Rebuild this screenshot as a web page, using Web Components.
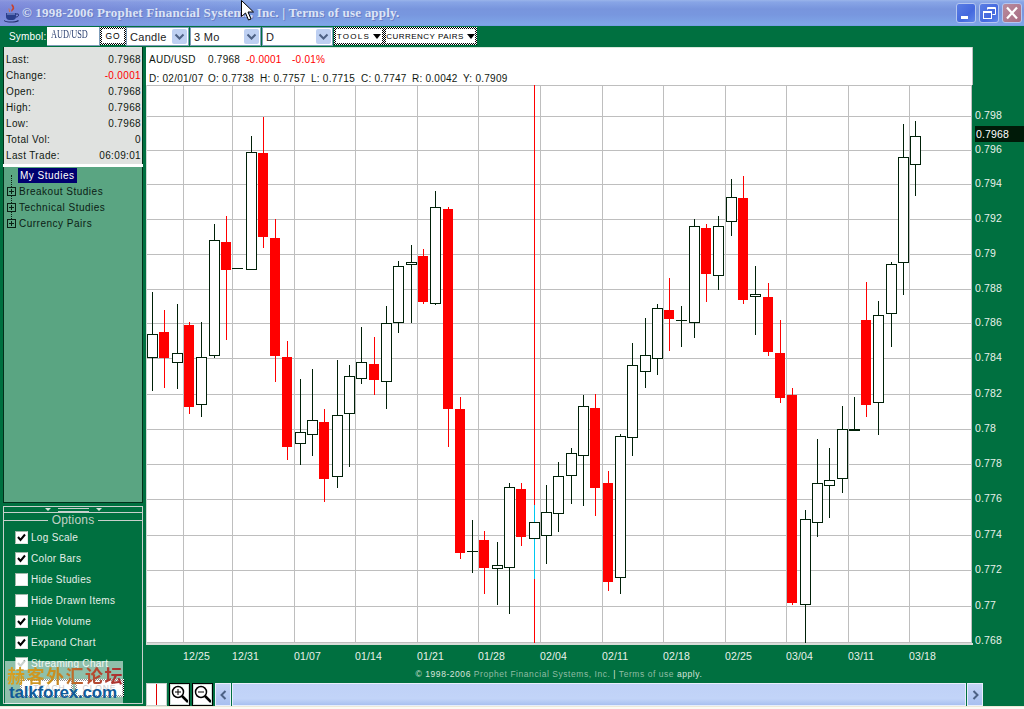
<!DOCTYPE html>
<html>
<head>
<meta charset="utf-8">
<title>Prophet Chart</title>
<style>
  html, body { margin: 0; padding: 0; width: 1024px; height: 709px; overflow: hidden; background: #007040; }
  body { font-family: "Liberation Sans", Arial, sans-serif; font-size: 10px; }
</style>
</head>
<body>
<x-app>
  <x-titlebar slot="top">© 1998-2006 Prophet Financial Systems, Inc. | Terms of use apply.</x-titlebar>
  <x-toolbar slot="top"></x-toolbar>
  <x-side slot="side">
    <x-quote></x-quote>
    <x-tree></x-tree>
    <x-options></x-options>
  </x-side>
  <x-chart slot="center"></x-chart>
  <x-bottom-bar slot="center"></x-bottom-bar>
</x-app>

<script>
class App extends HTMLElement {
  connectedCallback() {
    this.attachShadow({mode: 'open'}).innerHTML = `
    <style>
      :host { display: flex; flex-direction: column; width: 1024px; height: 709px; background: #007040; }
      .main { display: flex; height: 659px; }
      .side { display: block; width: 146px; flex: none; }
      .center { display: flex; flex-direction: column; flex: 1; min-width: 0; }
      .strip { height: 3px; background: linear-gradient(#ece9d8 0 1px, #fbfaf4 1px); }
    </style>
    <slot name="top"></slot>
    <div class="main">
      <div class="side"><slot name="side"></slot></div>
      <div class="center"><slot name="center"></slot></div>
    </div>
    <div class="strip"></div>`;
  }
}

class Titlebar extends HTMLElement {
  connectedCallback() {
    this.attachShadow({mode: 'open'}).innerHTML = `
    <style>
      :host {
        display: flex; align-items: center; position: relative; height: 26px; box-sizing: border-box; padding: 0 2px 0 3px;
        background:
          linear-gradient(90deg, rgba(125,110,205,.38), rgba(125,110,205,0) 24%),
          linear-gradient(#9ab4ea 0, #88a5e6 2px, #7895dd 9px, #7897df 15px, #7fa6e8 25px, #6f97e0 26px);
      }
      .icon { width: 17px; height: 20px; flex: none; margin-right: 2px; }
      .text {
        flex: 1; color: #dce4f6; font: bold 13px/1 "Liberation Serif", serif; letter-spacing: .2px;
        text-shadow: 1px 1px 0 #6b7cc4; white-space: nowrap; margin-top: -1px;
      }
      .btn {
        width: 20px; height: 20px; flex: none; margin-left: 3px; border: 1px solid #b4c6f0; border-radius: 3px; box-sizing: border-box;
        background: linear-gradient(135deg, #5a7ee4, #4468de 60%, #5f86ea);
        display: flex; align-items: center; justify-content: center;
      }
      .btn.close { background: linear-gradient(135deg, #b88c9e, #a86c82); margin-right: 0; }
      .btn svg { width: 18px; height: 18px; }
      .cursor { position: absolute; left: 241px; top: 0; width: 13px; height: 21px; }
    </style>
    <svg class="icon" viewBox="0 0 17 20">
      <path d="M9 1c-2 2 2 3 0 5-1 1-1 2 0 3 0-2 3-2 2-5 0-1-1-2-2-3z" fill="#c8402c"/>
      <path d="M6 5c-1 1 0 2 0 3 0 1 0 1 1 1 0-2-.5-3-1-4z" fill="#d8703c"/>
      <path d="M3 10h10v4c0 2-2 3-3 3H6c-1 0-3-1-3-3z" fill="#2a3f8c"/>
      <path d="M13 11h2c1 0 1 3-2 3" fill="none" stroke="#1c2a6c"/>
      <path d="M1 17c2 2 11 2 14 0l1 1c-3 2-12 2-15 0z" fill="#24306e"/>
      <path d="M4 11h8" stroke="#8ea4e4"/>
    </svg>
    <div class="text"><slot></slot></div>
    <div class="btn"><svg viewBox="0 0 18 18"><rect x="4" y="12" width="7" height="3" fill="#fff"/></svg></div>
    <div class="btn"><svg viewBox="0 0 18 18" fill="none" stroke="#fff"><path d="M7.500 5.500v-2h8v7h-3"/><path d="M7.500 4.500h8"/><rect x="3.500" y="7.500" width="8" height="7"/><path d="M3.500 8.500h8"/></svg></div>
    <div class="btn close"><svg viewBox="0 0 18 18" fill="none" stroke="#fff" stroke-width="2.200"><path d="M4 3.500l10 11M14 3.500l-10 11"/></svg></div>
    <svg class="cursor" viewBox="0 0 13 21"><path d="M.5.500v16l4-3.500 3 7 2.500-1-3-7h5.500z" fill="#fff" stroke="#000"/></svg>`;
  }
}

class DottedButton extends HTMLElement {
  connectedCallback() {
    this.attachShadow({mode: 'open'}).innerHTML = `
    <style>
      :host {
        display: flex; box-sizing: border-box; padding: 2px; height: 18px;
        background: conic-gradient(#000 25%, #fff 0 50%, #000 0 75%, #fff 0) 0 0 / 2px 2px;
      }
      div {
        flex: 1; background: #fff; display: flex; align-items: center; justify-content: center; gap: 3px;
        font-size: var(--btn-font, 8.500px); letter-spacing: var(--btn-spacing, .9px); color: var(--btn-color, #000); white-space: nowrap;
      }
      i { border: 4px solid transparent; border-top: 5px solid #000; border-bottom: 0; }
    </style>
    <div><slot></slot>${this.hasAttribute('menu') ? '<i></i>' : ''}</div>`;
  }
}

class Combo extends HTMLElement {
  connectedCallback() {
    this.attachShadow({mode: 'open'}).innerHTML = `
    <style>
      :host {
        display: flex; box-sizing: border-box; height: 19px; border: 1px solid #7f9db9; background: #fff; align-items: center;
        font-size: 11px; letter-spacing: .3px; color: #222; padding-left: 3px;
      }
      span { flex: 1; }
      svg { width: 15px; height: 15px; margin-right: 1px; flex: none; }
    </style>
    <span><slot></slot></span>
    <svg viewBox="0 0 15 15">
      <rect width="15" height="15" rx="2" fill="#bed0f2"/>
      <path d="M3.500 5.500l4 4 4-4" fill="none" stroke="#4d6185" stroke-width="2"/>
    </svg>`;
  }
}

class Toolbar extends HTMLElement {
  connectedCallback() {
    this.attachShadow({mode: 'open'}).innerHTML = `
    <style>
      :host { display: flex; height: 21px; box-sizing: border-box; padding-top: 1px; background: #007040; }
      .label { width: 38px; margin-left: 9px; color: #fff; font-size: 10px; letter-spacing: .2px; line-height: 20px; white-space: nowrap; }
      .sym {
        width: 53px; height: 19px; box-sizing: border-box; background: #fff; border: solid #7f9db9; border-width: 0 1px 1px 0;
        font: 11.500px/14px "Liberation Serif", serif; color: #2a3f70; padding-left: 4px;
      }
      .sym span { display: inline-block; transform: scaleX(.72); transform-origin: left; }
      x-dotted-button, x-combo { flex: none; }
    </style>
    <div class="label">Symbol:</div>
    <div class="sym"><span>AUD/USD</span></div>
    <x-dotted-button style="width:26px">GO</x-dotted-button>
    <x-combo style="width:63px">Candle</x-combo>
    <x-combo style="width:71px;margin-left:1px">3 Mo</x-combo>
    <x-combo style="width:71px;margin-left:1px">D</x-combo>
    <x-dotted-button menu style="width:50px;margin-left:1px;--btn-font:8px;--btn-spacing:1.300px">TOOLS</x-dotted-button>
    <x-dotted-button menu style="width:93px;--btn-font:8px;--btn-spacing:.47px">CURRENCY PAIRS</x-dotted-button>`;
  }
}

class Side extends HTMLElement {
  connectedCallback() {
    this.attachShadow({mode: 'open'}).innerHTML = `
    <style>
      :host { display: flex; flex-direction: column; height: 657px; box-sizing: border-box; padding-left: 3px; width: 143px; }
    </style>
    <slot></slot>`;
  }
}

class Quote extends HTMLElement {
  connectedCallback() {
    const rows = [
      ['Last:', '0.7968'], ['Change:', '-0.0001', 1], ['Open:', '0.7968'], ['High:', '0.7968'],
      ['Low:', '0.7968'], ['Total Vol:', '0'], ['Last Trade:', '06:09:01']
    ];
    this.attachShadow({mode: 'open'}).innerHTML = `
    <style>
      :host {
        display: block; height: 117px; box-sizing: border-box; background: #e0e2e0; border: 1px solid #02301a;
        border-width: 0 1px 0 1px; padding: 5px 1px 0 2px; color: #101810; font-size: 10px; letter-spacing: .35px;
      }
      .row { display: flex; justify-content: space-between; height: 16px; line-height: 16px; }
      .neg { color: #f00; }
    </style>
    ${rows.map(r => `<div class="row"><span>${r[0]}</span><span class="${r[2] ? 'neg' : ''}">${r[1]}</span></div>`).join('')}`;
  }
}

class Tree extends HTMLElement {
  connectedCallback() {
    const plus = `<svg width="9" height="9" viewBox="0 0 9 9"><rect x=".5" y=".5" width="8" height="8" fill="none" stroke="#0a2014"/><path d="M2 4.500h5M4.500 2v5" stroke="#0a2014"/></svg>`;
    this.attachShadow({mode: 'open'}).innerHTML = `
    <style>
      :host {
        display: block; position: relative; height: 336px; margin-top: 3px; box-sizing: border-box; background: #5aa582;
        border: 1px solid #02301a; border-width: 0 1px 1px 1px; padding-top: 1px; font-size: 10px; letter-spacing: .5px; color: #0a2014;
        box-shadow: 0 -3px 0 #fff;
      }
      .row { display: flex; align-items: center; height: 16px; padding-left: 3px; gap: 3px; position: relative; }
      .row.first { height: 15px; }
      .gap { width: 9px; }
      .sel { background: #000070; color: #fff; padding: 0 3px 0 2px; line-height: 15px; margin-left: -1px; }
      .dots { position: absolute; left: 7px; top: 8px; height: 50px; border-left: 1px dotted #0a2014; }
      svg { position: relative; background: #5aa582; flex: none; }
    </style>
    <div class="dots"></div>
    <div class="row first"><span class="gap"></span><span class="sel">My Studies</span></div>
    <div class="row">${plus}<span>Breakout Studies</span></div>
    <div class="row">${plus}<span>Technical Studies</span></div>
    <div class="row">${plus}<span>Currency Pairs</span></div>`;
  }
}

class Check extends HTMLElement {
  connectedCallback() {
    const on = this.hasAttribute('checked');
    const color = this.hasAttribute('faded') ? '#8a9a90' : '#000';
    this.attachShadow({mode: 'open'}).innerHTML = `
    <style>
      :host { display: flex; align-items: center; height: 21px; gap: 3px; color: #e4eee8; font-size: 10px; letter-spacing: .3px; }
      .box {
        width: 13px; height: 13px; box-sizing: border-box; background: #fff; flex: none;
        border: 1px solid; border-color: #9db8a8 #e4e8e4 #e4e8e4 #9db8a8;
      }
      svg { display: block; }
    </style>
    <div class="box">${on ? `<svg width="11" height="11" viewBox="0 0 11 11"><path d="M2 5l2.500 3L9 2.500" fill="none" stroke="${color}" stroke-width="2"/></svg>` : ''}</div>
    <span><slot></slot></span>`;
  }
}

class Options extends HTMLElement {
  connectedCallback() {
    this.attachShadow({mode: 'open'}).innerHTML = `
    <style>
      :host { display: block; position: relative; margin-top: 3px; height: 198px; box-sizing: border-box; color: #d8e4dc; }
      .split {
        height: 7px; box-sizing: border-box; border: solid #c8d0cc; border-width: 1px; display: flex; align-items: center; justify-content: center; gap: 7px;
      }
      .split i { border: 3px solid transparent; border-top: 3px solid #d8e4dc; border-bottom: 0; }
      .split b { width: 31px; height: 2px; border: solid #c8d0cc; border-width: 1px 0; }
      .frame { height: 191px; box-sizing: border-box; border: solid #c8d0cc; border-width: 0 1px 1px 1px; padding: 0 0 0 11px; position: relative; }
      .legend {
        display: flex; align-items: center; gap: 4px; height: 14px; margin: 0 0 0 -11px; font-size: 12px; letter-spacing: .2px; color: #c0d0c6;
      }
      .legend::before, .legend::after { content: ""; flex: 1; border-top: 1px solid #c8d0cc; }
      .btns { display: flex; gap: 2px; margin: 5px 0 0 5px; --btn-color: #888; }
      .mark {
        position: absolute; left: 1px; top: 148px; width: 118px; height: 43px; background: rgba(255,255,255,.56); overflow: hidden;
      }
      .cn {
        display: block; font: bold 18px/19px "Noto Sans CJK SC", sans-serif; letter-spacing: 1.500px; white-space: nowrap; margin: 5px 0 0 2px;
        background: linear-gradient(90deg, #d8a020, #c89020 40%, #b85030 70%, #a82c30); -webkit-background-clip: text; background-clip: text; color: transparent;
      }
      .en {
        display: block; font: bold 17px/20px "Liberation Sans", sans-serif; letter-spacing: -.2px; color: #0f5a98; margin: -2px 0 0 4px; white-space: nowrap;
      }
    </style>
    <div class="split"><i></i><b></b><i></i></div>
    <div class="frame">
      <div class="legend">Options</div>
      <x-check checked>Log Scale</x-check>
      <x-check checked>Color Bars</x-check>
      <x-check>Hide Studies</x-check>
      <x-check>Hide Drawn Items</x-check>
      <x-check checked>Hide Volume</x-check>
      <x-check checked>Expand Chart</x-check>
      <x-check checked faded>Streaming Chart</x-check>
      <div class="btns">
        <x-dotted-button style="width:53px">ATTACH</x-dotted-button>
        <x-dotted-button style="width:49px">CLONE</x-dotted-button>
      </div>
      <div class="mark"><span class="cn">赫客外汇论坛</span><span class="en">talkforex.com</span></div>
    </div>`;
  }
}

// x, wick top, wick bottom, body top, body bottom (screen pixels of the reference)
const CANDLES = `w 152 292 391 334 357|r 164 310 388 332 358|w 177 304 389 353 362|r 189 322 414 325 407|w 201 322 417 357 404
w 214 224 358 240 355|r 226 216 340 242 270|d 237 268 268 268 268|w 251 136 269 152 269|r 263 117 248 153 237
r 275 219 382 238 356|r 287 341 460 357 447|w 300 379 465 432 443|w 312 369 456 420 434|r 324 409 502 422 479
w 337 360 488 415 476|w 349 365 467 376 413|w 361 327 384 362 378|r 374 337 395 364 380|w 386 306 409 323 381
w 398 261 333 266 322|w 411 245 323 262 264|r 423 249 304 256 302|w 435 191 305 207 303|r 448 207 447 209 409
r 460 397 559 409 553|d 472 520 573 551 551|r 484 531 594 540 568|w 497 542 605 565 568|w 509 483 614 487 567
r 521 483 546 489 537|c 534 505 579 522 538|w 546 485 564 512 535|w 558 462 532 476 513|w 571 448 504 453 475
w 583 395 506 406 455|r 595 394 516 408 488|r 608 471 591 483 582|w 620 434 594 436 577|w 632 343 456 365 437
w 645 318 388 355 371|w 657 304 375 308 358|r 669 278 351 310 319|d 681 306 347 320 320|w 694 219 338 226 322
r 706 224 302 228 274|w 718 216 290 226 275|w 731 179 236 197 221|r 743 176 304 198 300|w 755 266 335 294 296
r 768 283 356 297 352|r 780 320 403 353 398|r 792 388 605 395 603|w 805 510 643 519 604|w 817 439 537 483 522
w 829 448 518 480 485|w 842 406 493 429 478|t 854 397 430 429 429|r 866 282 417 320 405|w 878 301 435 315 402
w 891 262 347 264 313|w 903 124 295 157 262|w 915 121 196 136 164`.split(/[|\n]/).map(s => s.trim().split(' '));

const GRID_Y = [85, 116, 150, 184, 219, 254, 289, 323, 358, 394, 429, 464, 499, 535, 570, 606, 642];
const GRID_X = [183, 232, 294, 355, 417, 478, 540, 602, 663, 725, 786, 848, 909];
const Y_LABELS = ['0.798', '0.796', '0.794', '0.792', '0.79', '0.788', '0.786', '0.784', '0.782', '0.78', '0.778', '0.776', '0.774', '0.772', '0.77', '0.768'];
const X_LABELS = ['12/25', '12/31', '01/07', '01/14', '01/21', '01/28', '02/04', '02/11', '02/18', '02/25', '03/04', '03/11', '03/18'];
const DARK = '#002008';
const RED = '#ff0000';

function candleSvg(row) {
  const type = row[0];
  const [x, top, bottom, bodyTop, bodyBottom] = row.slice(1).map(Number);
  const color = type === 'r' ? RED : DARK;
  const wick = type === 'c' ? '#00c8f0' : color;
  let out = top !== bottom ? `<rect x="${x}" y="${top}" width="1" height="${bottom - top}" fill="${wick}"/>` : '';
  if (type === 'r') {
    out += `<rect x="${x - 5}" y="${bodyTop}" width="10" height="${bodyBottom - bodyTop}" fill="${RED}"/>`;
  } else if (type === 'd' || type === 't') {
    out += `<rect x="${x - 5}" y="${bodyTop}" width="11" height="${type === 't' ? 2 : 1}" fill="${DARK}"/>`;
  } else {
    out += `<rect x="${x - 4.5}" y="${bodyTop + .5}" width="10" height="${bodyBottom - bodyTop}" fill="#fff" stroke="${DARK}"/>`;
  }
  return out;
}

class Chart extends HTMLElement {
  connectedCallback() {
    const grid = GRID_Y.map(y => `<rect x="147" y="${y}" width="824" height="1"/>`).join('')
      + GRID_X.map(x => `<rect x="${x}" y="85" width="1" height="558"/>`).join('');
    const yLabels = Y_LABELS.map((t, i) => `<text x="975" y="${GRID_Y[i + 1] + 3 - (i === 15 ? 1 : 0)}">${t}</text>`).join('');
    const xLabels = X_LABELS.map((t, i) => `<text x="${GRID_X[i]}" y="660">${t}</text>`).join('');
    this.attachShadow({mode: 'open'}).innerHTML = `
    <style>
      :host { display: block; flex: none; }
      .head {
        width: 826px; height: 38px; box-sizing: border-box; background: #fff; border-top: 1px solid #d8e8dc;
        padding: 2px 0 0 3px; color: #101810; font-size: 10px; letter-spacing: .25px; box-shadow: 1px 0 0 #c0c0c0;
      }
      .line { display: flex; height: 19px; line-height: 19px; white-space: nowrap; }
      .line span { flex: none; }
      .neg { color: #f00; }
      svg { display: block; font-family: "Liberation Sans", sans-serif; font-size: 10.500px; letter-spacing: .15px; }
      text { fill: #e8f0ea; }
      .foot {
        width: 826px; height: 19px; line-height: 20px; text-align: center; font-size: 8.500px; letter-spacing: .55px; color: #d8e4dc; white-space: nowrap;
      }
      .foot em { font-style: normal; color: #8fbca4; }
    </style>
    <div class="head">
      <div class="line">
        <span style="width:59px">AUD/USD</span><span style="width:38px">0.7968</span><span class="neg" style="width:46px">-0.0001</span><span class="neg">-0.01%</span>
      </div>
      <div class="line">
        <span style="width:59px">D: 02/01/07</span><span style="width:52px">O: 0.7738</span><span style="width:51px">H: 0.7757</span><span style="width:50px">L: 0.7715</span><span style="width:51px">C: 0.7747</span><span style="width:51px">R: 0.0042</span><span>Y: 0.7909</span>
      </div>
    </div>
    <svg width="878" height="579" viewBox="146 85 878 579" shape-rendering="crispEdges">
      <rect x="146" y="85" width="826" height="558" fill="#fff"/>
      <rect x="146" y="85" width="1" height="558" fill="#d0d8d4"/>
      <rect x="971" y="85" width="1" height="558" fill="#c0c0c0"/>
      <rect x="146" y="643" width="827" height="2" fill="#d8dcd8"/>
      <g fill="#bebebe">${grid}</g>
      ${CANDLES.map(candleSvg).join('')}
      <rect x="534" y="85" width="1" height="420" fill="${RED}"/>
      <rect x="534" y="579" width="1" height="64" fill="${RED}"/>
      <rect x="975" y="126" width="49" height="16" fill="#001a08"/>
      ${yLabels}
      <text x="976" y="138" style="fill:#fff">0.7968</text>
      ${xLabels}
    </svg>
    <div class="foot">© 1998-2006 <em>Prophet Financial Systems, Inc.</em> | <em>Terms of use</em> apply.</div>`;
  }
}

class BottomBar extends HTMLElement {
  connectedCallback() {
    const lens = (plus) => `<svg width="21" height="22" viewBox="0 0 21 22" fill="none" stroke="#000">
      <circle cx="9" cy="9" r="5.500" stroke-width="1.500"/>
      <path d="M6 9h6${plus ? 'M9 6v6' : ''}"/>
      <path d="M13 13l6 6" stroke-width="2.500"/>
    </svg>`;
    this.attachShadow({mode: 'open'}).innerHTML = `
    <style>
      :host { display: flex; height: 23px; flex: none; width: 837px; }
      .mark { width: 21px; box-sizing: border-box; background: #fff; border: 1px solid #c8d0cc; display: flex; justify-content: center; margin-right: 2px; }
      .mark i { width: 1px; background: #e00000; }
      .zoom { width: 21px; box-sizing: border-box; border: 1px solid #000; outline: 1px solid #d0e0d8; outline-offset: -2px; background: #fff; margin-right: 2px; flex: none; }
      .zoom svg { display: block; margin: -1px 0 0 -1px; }
      .arrow {
        width: 16px; flex: none; box-sizing: border-box; background: linear-gradient(#c4d4f6, #a8c0f0); border: 1px solid #e8eefc;
        display: flex; align-items: center; justify-content: center;
      }
      .arrow svg { width: 7px; height: 10px; }
      .track {
        flex: 1; margin: 0 1px; box-sizing: border-box; border: 1px solid #e8eefc;
        background: linear-gradient(#bfd1f7 0, #c2d4f8 70%, #a8c0f0);
      }
    </style>
    <div class="mark"><i></i></div>
    <div class="zoom">${lens(true)}</div>
    <div class="zoom">${lens(false)}</div>
    <div class="arrow"><svg viewBox="0 0 7 10"><path d="M5.500 1l-4 4 4 4" fill="none" stroke="#4d6185" stroke-width="2"/></svg></div>
    <div class="track"></div>
    <div class="arrow"><svg viewBox="0 0 7 10"><path d="M1.500 1l4 4-4 4" fill="none" stroke="#4d6185" stroke-width="2"/></svg></div>`;
  }
}

customElements.define('x-app', App);
customElements.define('x-titlebar', Titlebar);
customElements.define('x-dotted-button', DottedButton);
customElements.define('x-combo', Combo);
customElements.define('x-toolbar', Toolbar);
customElements.define('x-side', Side);
customElements.define('x-quote', Quote);
customElements.define('x-tree', Tree);
customElements.define('x-check', Check);
customElements.define('x-options', Options);
customElements.define('x-chart', Chart);
customElements.define('x-bottom-bar', BottomBar);
</script>
</body>
</html>
